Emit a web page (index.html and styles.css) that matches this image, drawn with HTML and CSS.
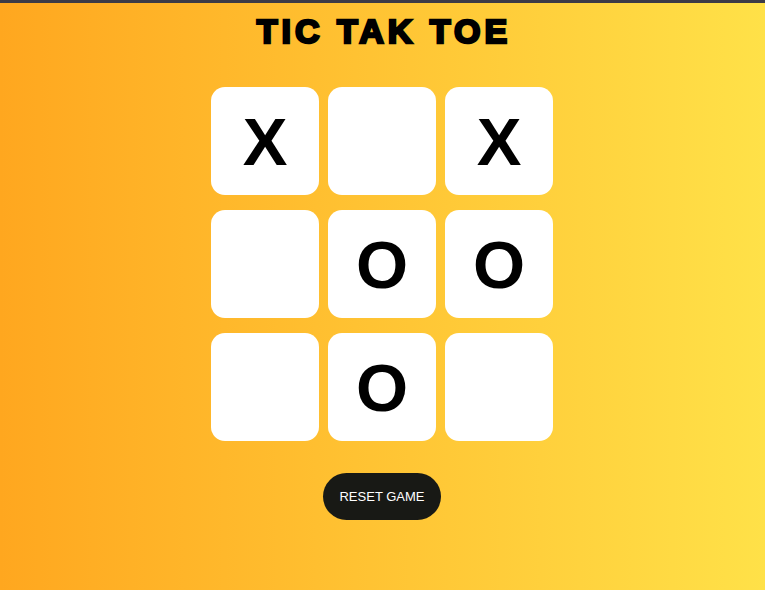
FILE: index.html
```html
<!DOCTYPE html>
<html>
<head>
<meta charset="utf-8">
<link rel="stylesheet" href="styles.css">
</head>
<body>
<div class="topbar"></div>
<main class="game">
  <h1 class="title">TIC TAK TOE</h1>
  <div class="board">
    <button class="cell">X</button>
    <button class="cell"></button>
    <button class="cell">X</button>
    <button class="cell"></button>
    <button class="cell">O</button>
    <button class="cell">O</button>
    <button class="cell"></button>
    <button class="cell">O</button>
    <button class="cell"></button>
  </div>
  <button class="reset">RESET GAME</button>
</main>
</body>
</html>
```
FILE: styles.css
```css
html, body {
  margin: 0;
  padding: 0;
  height: 100%;
}
body {
  background: linear-gradient(to right, #ffa71f, #ffe148);
  font-family: "Liberation Sans", Arial, sans-serif;
}
.topbar {
  height: 3px;
  background: #3c3b47;
}
.game {
  display: flex;
  flex-direction: column;
  align-items: center;
  padding-right: 1px;
}
.title {
  margin: 5px 0 0;
  padding-left: 4px;
  font-family: "Liberation Sans", Arial, sans-serif;
  font-size: 34px;
  line-height: 46px;
  font-weight: bold;
  letter-spacing: 4px;
  color: #000;
  -webkit-text-stroke: 2.5px #000;
}
.board {
  margin-top: 33px;
  display: grid;
  grid-template-columns: repeat(3, 108px);
  grid-auto-rows: 108px;
  column-gap: 9px;
  row-gap: 15px;
}
.cell {
  border: none;
  background: #fff;
  border-radius: 14px;
  font-family: "Liberation Sans", Arial, sans-serif;
  font-weight: bold;
  font-size: 67px;
  color: #000;
  padding: 0;
  display: flex;
  align-items: center;
  justify-content: center;
}
.reset {
  margin-top: 32px;
  width: 118px;
  height: 47px;
  border: none;
  border-radius: 24px;
  background: #181915;
  color: #fff;
  font-family: "Liberation Sans", Arial, sans-serif;
  font-size: 13px;
  padding: 0;
}
```
